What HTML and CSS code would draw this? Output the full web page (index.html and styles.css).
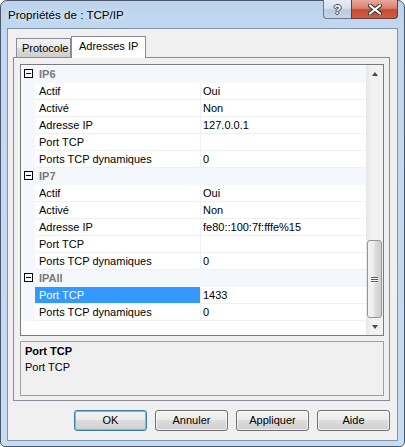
FILE: index.html
```html
<!DOCTYPE html>
<html lang="fr">
<head>
<meta charset="utf-8">
<title>Propriétés de : TCP/IP</title>
<link rel="stylesheet" href="styles.css">
</head>
<body>
<div class="window">
  <div class="titlebar">
    <span class="title">Propriétés de : TCP/IP</span>
    <div class="caption">
      <div class="cbtn help">?</div>
      <div class="cbtn close">
        <svg width="14" height="11" viewBox="0 0 14 11"><path d="M2 1.5 L12 9.5 M12 1.5 L2 9.5" stroke="#3c3c3c" stroke-width="4.2" stroke-linecap="round"/><path d="M2 1.5 L12 9.5 M12 1.5 L2 9.5" stroke="#ffffff" stroke-width="2.2" stroke-linecap="round"/></svg>
      </div>
    </div>
  </div>
  <div class="client">
    <div class="tabs">
      <div class="tab">Protocole</div>
      <div class="tab active">Adresses IP</div>
    </div>
    <div class="panel">
      <div class="grid">
        <div class="rows">
          <div class="row cat"><div class="gutter"><span class="minus"></span></div><div class="catname">IP6</div></div>
          <div class="row"><div class="gutter"></div><div class="label">Actif</div><div class="value">Oui</div></div>
          <div class="row"><div class="gutter"></div><div class="label">Activé</div><div class="value">Non</div></div>
          <div class="row"><div class="gutter"></div><div class="label">Adresse IP</div><div class="value">127.0.0.1</div></div>
          <div class="row"><div class="gutter"></div><div class="label">Port TCP</div><div class="value"></div></div>
          <div class="row"><div class="gutter"></div><div class="label">Ports TCP dynamiques</div><div class="value">0</div></div>
          <div class="row cat"><div class="gutter"><span class="minus"></span></div><div class="catname">IP7</div></div>
          <div class="row"><div class="gutter"></div><div class="label">Actif</div><div class="value">Oui</div></div>
          <div class="row"><div class="gutter"></div><div class="label">Activé</div><div class="value">Non</div></div>
          <div class="row"><div class="gutter"></div><div class="label">Adresse IP</div><div class="value">fe80::100:7f:fffe%15</div></div>
          <div class="row"><div class="gutter"></div><div class="label">Port TCP</div><div class="value"></div></div>
          <div class="row"><div class="gutter"></div><div class="label">Ports TCP dynamiques</div><div class="value">0</div></div>
          <div class="row cat"><div class="gutter"><span class="minus"></span></div><div class="catname">IPAll</div></div>
          <div class="row"><div class="gutter"></div><div class="label selected">Port TCP</div><div class="value">1433</div></div>
          <div class="row"><div class="gutter"></div><div class="label">Ports TCP dynamiques</div><div class="value">0</div></div>
        </div>
        <div class="scrollbar">
          <div class="sbtn"><span class="arrow up"></span></div>
          <div class="track">
            <div class="thumb"><span class="grip"></span><span class="grip"></span><span class="grip"></span></div>
          </div>
          <div class="sbtn"><span class="arrow down"></span></div>
        </div>
      </div>
      <div class="desc">
        <div class="desc-title">Port TCP</div>
        <div class="desc-text">Port TCP</div>
      </div>
    </div>
    <div class="buttons">
      <div class="btn default">OK</div>
      <div class="btn">Annuler</div>
      <div class="btn">Appliquer</div>
      <div class="btn">Aide</div>
    </div>
  </div>
</div>
</body>
</html>
```
FILE: styles.css
```css
* { box-sizing: border-box; }
html, body { margin: 0; padding: 0; background: #ffffff; }
body { font-family: "Liberation Sans", Arial, sans-serif; font-size: 11px; color: #000; }

.window {
  width: 405px;
  height: 447px;
  border: 1px solid #4a5869;
  border-radius: 7px 7px 5px 5px;
  background: linear-gradient(180deg, #bdd3ec 0px, #c2d8f0 28px, #c6dcf3 100%);
  padding: 0 6px 5px 6px;
  display: flex;
  flex-direction: column;
}

.titlebar {
  height: 27px;
  display: flex;
  justify-content: space-between;
  align-items: flex-start;
  flex: none;
}
.title {
  font-size: 11.6px;
  color: #000;
  padding-left: 1px;
  line-height: 27px;
  text-shadow: 0 0 6px rgba(255,255,255,0.9);
}
.caption {
  display: flex;
  margin-top: -1px;
}
.cbtn {
  height: 19px;
  display: flex;
  align-items: center;
  justify-content: center;
}
.help {
  width: 28px;
  border: 1px solid #6b7b8e;
  border-top: none;
  border-right: none;
  border-radius: 0 0 0 4px;
  background: linear-gradient(180deg, #e4edf7 0%, #d5e1ee 45%, #bccbdd 55%, #c8d6e6 100%);
  color: #fff;
  font-weight: bold;
  font-size: 13px;
  text-shadow: 1px 0 0 #3c4652, -1px 0 0 #3c4652, 0 1px 0 #3c4652, 0 -1px 0 #3c4652;
}
.close {
  width: 47px;
  border: 1px solid #6a3a32;
  border-top: none;
  border-radius: 0 0 4px 0;
  background: linear-gradient(180deg, #e9a99b 0%, #d7826f 45%, #c24a33 55%, #d0604a 100%);
}

.client {
  height: 413px;
  border: 1px solid #7f93a9;
  background: #f0f0f0;
  padding-top: 7px;
  display: flex;
  flex-direction: column;
}

.tabs {
  height: 21px;
  display: flex;
  align-items: flex-end;
  padding-left: 8px;
  flex: none;
}
.tab {
  height: 19px;
  width: 55px;
  border: 1px solid #898c95;
  border-bottom: none;
  background: linear-gradient(180deg, #f2f2f2 0%, #ebebeb 50%, #dddddd 50%, #cfcfcf 100%);
  padding-left: 5px;
  line-height: 18px;
}
.tab.active {
  width: 75px;
  height: 22px;
  margin-bottom: -1px;
  margin-left: 0;
  background: #ffffff;
  padding-left: 7px;
  line-height: 19px;
  position: relative;
  z-index: 1;
}

.panel {
  height: 344px;
  margin: 0 7px 0 5px;
  border: 1px solid #898c95;
  background: #f0f0f0;
  padding: 6px 5px 4px 6px;
  display: flex;
  flex-direction: column;
}

.grid {
  height: 272px;
  border: 1px solid #7a7a7a;
  background: #ffffff;
  display: flex;
  flex: none;
}
.rows {
  width: 345px;
  padding-top: 1px;
}
.row {
  display: flex;
  height: 17px;
}
.gutter {
  width: 14px;
  flex: none;
  background: #f4f7fc;
  padding: 3px 0 0 3px;
}
.minus {
  display: block;
  width: 9px;
  height: 9px;
  border: 1px solid #000;
  background: #fff;
  position: relative;
}
.minus::after {
  content: "";
  position: absolute;
  left: 1px;
  top: 3px;
  width: 5px;
  height: 1px;
  background: #000;
}
.label {
  width: 166px;
  flex: none;
  border-right: 1px solid #f0f0f0;
  border-bottom: 1px solid #f0f0f0;
  padding-left: 4px;
  line-height: 16px;
  white-space: nowrap;
}
.label.selected {
  background: #3399ff;
  color: #fff;
}
.value {
  width: 165px;
  flex: none;
  border-bottom: 1px solid #f0f0f0;
  padding-left: 2px;
  line-height: 16px;
  white-space: nowrap;
}
.row.cat {
  background: #f4f7fc;
}
.catname {
  flex: 1;
  padding-left: 4px;
  font-weight: bold;
  color: #7a7a7a;
  line-height: 17px;
}

.scrollbar {
  width: 17px;
  flex: none;
  display: flex;
  flex-direction: column;
  background: linear-gradient(90deg, #e6e6e6 0%, #f2f2f2 30%, #f2f2f2 100%);
}
.sbtn {
  height: 17px;
  flex: none;
  display: flex;
  align-items: center;
  justify-content: center;
}
.arrow {
  width: 0;
  height: 0;
  border-left: 3.5px solid transparent;
  border-right: 3.5px solid transparent;
}
.arrow.up { border-bottom: 4px solid #4a4a4a; }
.arrow.down { border-top: 4px solid #4a4a4a; }
.track {
  flex: 1;
  display: flex;
  flex-direction: column;
  justify-content: flex-end;
  padding: 0 1px;
}
.thumb {
  height: 78px;
  border: 1px solid #959595;
  border-radius: 3px;
  background: linear-gradient(90deg, #f4f4f4 0%, #ececec 45%, #dcdcdc 55%, #d0d0d0 100%);
  display: flex;
  flex-direction: column;
  align-items: center;
  justify-content: center;
  gap: 1px;
}
.grip {
  display: block;
  width: 7px;
  height: 1px;
  background: #5a5a5a;
  box-shadow: 0 1px 0 #f8f8f8;
}

.desc {
  height: 55px;
  margin-top: 5px;
  border: 1px solid #a0a0a0;
  background: #f0f0f0;
  padding: 1px 0 0 4px;
  flex: none;
}
.desc-title, .desc-text { line-height: 16px; }
.desc-title { font-weight: bold; }

.buttons {
  display: flex;
  justify-content: flex-end;
  gap: 8px;
  padding-right: 7px;
  margin-top: 9px;
}
.btn {
  width: 73px;
  height: 21px;
  border: 1px solid #707070;
  border-radius: 3px;
  background: linear-gradient(180deg, #f2f2f2 0%, #ebebeb 50%, #dddddd 50%, #cfcfcf 100%);
  box-shadow: inset 0 0 0 1px rgba(255,255,255,0.7);
  text-align: center;
  line-height: 19px;
}
.btn.default {
  border-color: #3c7fb1;
  box-shadow: inset 0 0 0 1px #48d3f2;
}
```
